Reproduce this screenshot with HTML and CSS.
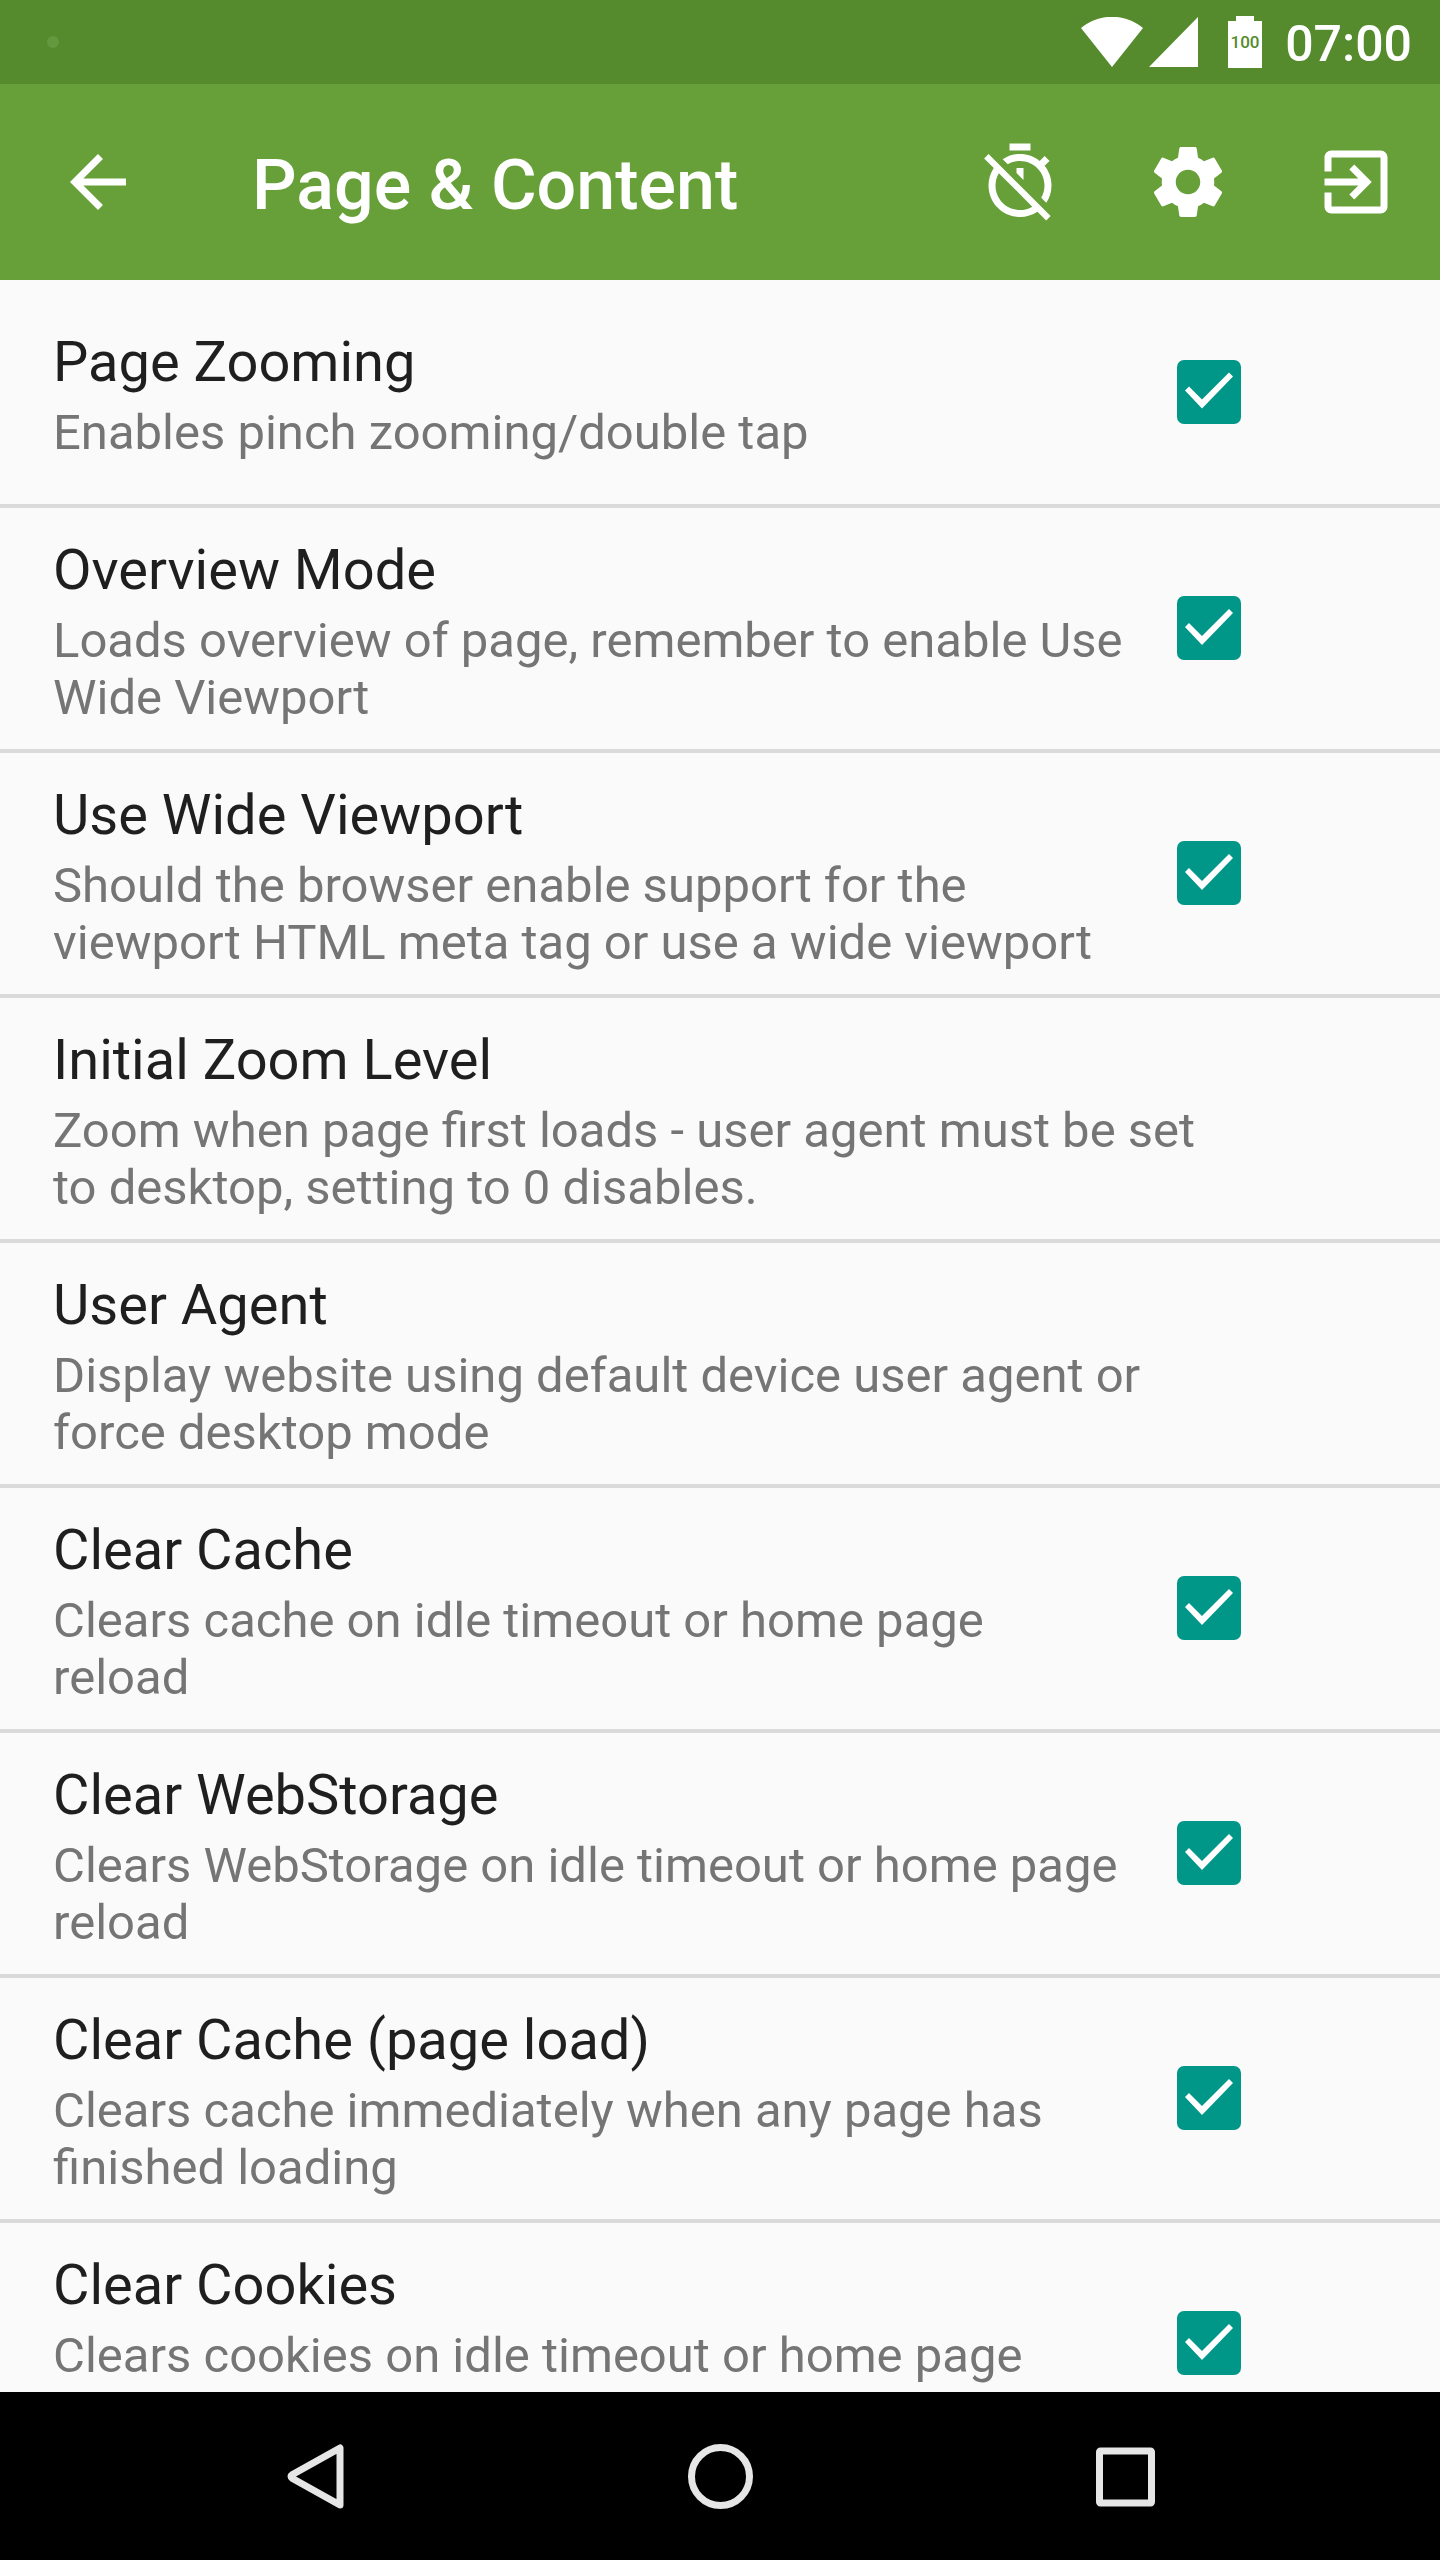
FILE: index.html
```html
<!DOCTYPE html>
<html lang="en">
<head>
<meta charset="utf-8">
<meta name="viewport" content="width=device-width, initial-scale=1">
<title>Page &amp; Content</title>
<link rel="stylesheet" href="styles.css">
</head>
<body>
<div class="status-bar">
  <span class="notification-dot"></span>
  <div class="status-icons">
    <svg class="wifi" viewBox="0 0 62 50" aria-hidden="true"><path d="M0 11C18-4 44-4 62 11L31 50z"/></svg>
    <svg class="signal" viewBox="0 0 49 50" aria-hidden="true"><path d="M49 0v50H0z"/></svg>
    <svg class="battery" viewBox="0 0 34 52" aria-hidden="true"><path d="M8 0h18v5h8v47H0V5h8z"/><text class="battery-level" x="17" y="32" text-anchor="middle">100</text></svg>
  </div>
  <time class="clock">07:00</time>
</div>

<header class="toolbar">
  <button class="back-button" type="button" aria-label="Back">
    <svg class="icon" viewBox="0 0 24 24"><path d="M20 11H7.83l5.59-5.59L12 4l-8 8 8 8 1.41-1.41L7.83 13H20v-2z"/></svg>
  </button>
  <h1 class="toolbar-title">Page &amp; Content</h1>
  <button class="action-button" type="button" aria-label="Disable timer">
    <svg class="icon" viewBox="0 0 24 24"><path d="M19.04 4.55l-1.42 1.42C16.07 4.74 14.12 4 12 4c-1.83 0-3.53.55-4.95 1.48l1.46 1.46C9.53 6.35 10.73 6 12 6c3.87 0 7 3.13 7 7 0 1.27-.35 2.47-.94 3.49l1.45 1.45C20.45 16.53 21 14.83 21 13c0-2.12-.74-4.07-1.97-5.61l1.42-1.42-1.41-1.42zM15 1H9v2h6V1zm-4 8.44l2 2V8h-2v1.44zM3.02 4L1.75 5.27 4.5 8.03C3.55 9.45 3 11.16 3 13c0 4.97 4.02 9 9 9 1.84 0 3.55-.55 4.98-1.5l2.5 2.5 1.27-1.27-7.71-7.71L3.02 4zM12 20c-3.87 0-7-3.13-7-7 0-1.28.35-2.48.95-3.52l9.56 9.56c-1.03.61-2.23.96-3.51.96z"/></svg>
  </button>
  <button class="action-button" type="button" aria-label="Settings">
    <svg class="icon" viewBox="0 0 24 24"><path d="M19.43 12.98c.04-.32.07-.64.07-.98s-.03-.66-.07-.98l2.11-1.65c.19-.15.24-.42.12-.64l-2-3.46c-.12-.22-.39-.3-.61-.22l-2.49 1c-.52-.4-1.08-.73-1.69-.98l-.38-2.65C14.46 2.18 14.25 2 14 2h-4c-.25 0-.46.18-.49.42l-.38 2.65c-.61.25-1.17.59-1.69.98l-2.49-1c-.23-.09-.49 0-.61.22l-2 3.46c-.13.22-.07.49.12.64l2.11 1.65c-.04.32-.07.65-.07.98s.03.66.07.98l-2.11 1.65c-.19.15-.24.42-.12.64l2 3.46c.12.22.39.3.61.22l2.49-1c.52.4 1.08.73 1.69.98l.38 2.65c.03.24.24.42.49.42h4c.25 0 .46-.18.49-.42l.38-2.65c.61-.25 1.17-.59 1.69-.98l2.49 1c.23.09.49 0 .61-.22l2-3.46c.12-.22.07-.49-.12-.64l-2.11-1.65zM12 15.5c-1.93 0-3.5-1.57-3.5-3.5s1.57-3.5 3.5-3.5 3.5 1.57 3.5 3.5-1.57 3.5-3.5 3.5z"/></svg>
  </button>
  <button class="action-button" type="button" aria-label="Exit">
    <svg class="icon" viewBox="0 0 24 24"><path d="M10.09 15.59L11.5 17l5-5-5-5-1.41 1.41L12.67 11H3v2h9.67l-2.58 2.59zM19 3H5c-1.11 0-2 .9-2 2v4h2V5h14v14H5v-4H3v4c0 1.1.89 2 2 2h14c1.1 0 2-.9 2-2V5c0-1.1-.9-2-2-2z"/></svg>
  </button>
</header>

<main class="settings">
  <label class="setting">
    <span class="setting-text"><span class="setting-title">Page Zooming</span><span class="setting-summary">Enables pinch zooming/double tap</span></span>
    <input class="checkbox" type="checkbox" checked>
  </label>
  <label class="setting">
    <span class="setting-text"><span class="setting-title">Overview Mode</span><span class="setting-summary">Loads overview of page, remember to enable Use Wide Viewport</span></span>
    <input class="checkbox" type="checkbox" checked>
  </label>
  <label class="setting">
    <span class="setting-text"><span class="setting-title">Use Wide Viewport</span><span class="setting-summary">Should the browser enable support for the viewport HTML meta tag or use a wide viewport</span></span>
    <input class="checkbox" type="checkbox" checked>
  </label>
  <button class="setting" type="button">
    <span class="setting-text"><span class="setting-title">Initial Zoom Level</span><span class="setting-summary">Zoom when page first loads - user agent must be set to desktop, setting to 0 disables.</span></span>
  </button>
  <button class="setting" type="button">
    <span class="setting-text"><span class="setting-title">User Agent</span><span class="setting-summary">Display website using default device user agent or force desktop mode</span></span>
  </button>
  <label class="setting">
    <span class="setting-text"><span class="setting-title">Clear Cache</span><span class="setting-summary">Clears cache on idle timeout or home page reload</span></span>
    <input class="checkbox" type="checkbox" checked>
  </label>
  <label class="setting">
    <span class="setting-text"><span class="setting-title">Clear WebStorage</span><span class="setting-summary">Clears WebStorage on idle timeout or home page reload</span></span>
    <input class="checkbox" type="checkbox" checked>
  </label>
  <label class="setting">
    <span class="setting-text"><span class="setting-title">Clear Cache (page load)</span><span class="setting-summary">Clears cache immediately when any page has finished loading</span></span>
    <input class="checkbox" type="checkbox" checked>
  </label>
  <label class="setting">
    <span class="setting-text"><span class="setting-title">Clear Cookies</span><span class="setting-summary">Clears cookies on idle timeout or home page reload</span></span>
    <input class="checkbox" type="checkbox" checked>
  </label>
</main>

<nav class="nav-bar" aria-label="System">
  <button class="nav-button" type="button" aria-label="Back">
    <svg class="nav-icon" viewBox="0 0 84 84"><path d="M67 14v57L19.500 44.500q-3-2 0-4z"/></svg>
  </button>
  <button class="nav-button" type="button" aria-label="Home">
    <svg class="nav-icon" viewBox="0 0 84 84"><circle cx="42.500" cy="42.500" r="29"/></svg>
  </button>
  <button class="nav-button" type="button" aria-label="Recent apps">
    <svg class="nav-icon" viewBox="0 0 84 84"><rect x="16.500" y="17" width="52" height="52" rx="1"/></svg>
  </button>
</nav>
</body>
</html>
```
FILE: styles.css
```css
* {
  box-sizing: border-box;
}

body {
  margin: 0;
  height: 100vh;
  display: flex;
  flex-direction: column;
  background: #fafafa;
  color: #1f1f1f;
  font-family: Roboto, "Noto Sans", sans-serif;
}

button {
  margin: 0;
  padding: 0;
  border: 0;
  background: none;
  color: inherit;
  font: inherit;
  text-align: left;
}

/* Status bar */
.status-bar {
  flex: none;
  height: 84px;
  padding: 0 28px 0 47px;
  display: flex;
  align-items: center;
  background: #558b2d;
  color: #fff;
}

.notification-dot {
  width: 12px;
  height: 12px;
  border-radius: 50%;
  background: #639a40;
}

.status-icons {
  margin-left: auto;
  display: flex;
  align-items: center;
  fill: #fff;
}

.wifi {
  width: 62px;
  height: 50px;
  margin-right: 6px;
}

.signal {
  width: 49px;
  height: 50px;
  margin-right: 30px;
}

.battery {
  width: 34px;
  height: 52px;
  margin-right: 23px;
}

.battery-level {
  fill: #558b2d;
  font-size: 17px;
  font-weight: 500;
}

.clock {
  padding-top: 4px;
  font-size: 50px;
  line-height: 57px;
  font-weight: 500;
}

/* Toolbar */
.toolbar {
  flex: none;
  height: 196px;
  display: flex;
  align-items: center;
  background: #67a038;
  color: #fff;
}

.back-button,
.action-button {
  flex: none;
  height: 168px;
  display: flex;
  align-items: center;
  justify-content: center;
}

.back-button {
  width: 196px;
}

.action-button {
  width: 168px;
}

.icon {
  width: 84px;
  height: 84px;
  fill: currentColor;
}

.toolbar-title {
  flex: 1;
  margin: 0;
  padding: 6px 0 0 56px;
  font-size: 70px;
  line-height: 82px;
  font-weight: 500;
}

/* Preference list */
.settings {
  flex: 1;
  min-height: 0;
  overflow-y: auto;
  scrollbar-width: none;
}

.setting {
  width: 100%;
  min-height: 228px;
  padding: 29px 199px 23px 53px;
  border-bottom: 4px solid #dadada;
  display: flex;
  align-items: center;
  gap: 46px;
}

.setting-text {
  flex: 1;
  display: flex;
  flex-direction: column;
  gap: 9px;
}

.setting-title {
  font-size: 56px;
  line-height: 66px;
}

.setting-summary {
  color: #757575;
  font-size: 49px;
  line-height: 57px;
}

.checkbox {
  appearance: none;
  flex: none;
  width: 64px;
  height: 64px;
  margin: -7px 0 0;
  border: 6px solid #757575;
  border-radius: 7px;
}

.checkbox:checked {
  border: 0;
  background: #009688;
}

.checkbox:checked::before {
  content: "";
  display: block;
  height: 64px;
  background: #fff;
  clip-path: polygon(8px 31px, 12px 27px, 25px 40px, 52px 13px, 56px 17px, 25px 49px);
}

/* System navigation */
.nav-bar {
  flex: none;
  height: 168px;
  padding: 0 112px;
  display: grid;
  grid-template-columns: repeat(3, 1fr);
  background: #000;
}

.nav-button {
  display: flex;
  align-items: center;
  justify-content: center;
}

.nav-icon {
  width: 84px;
  height: 84px;
  fill: none;
  stroke: #e6e6e6;
  stroke-width: 7;
  stroke-linejoin: round;
}
```
